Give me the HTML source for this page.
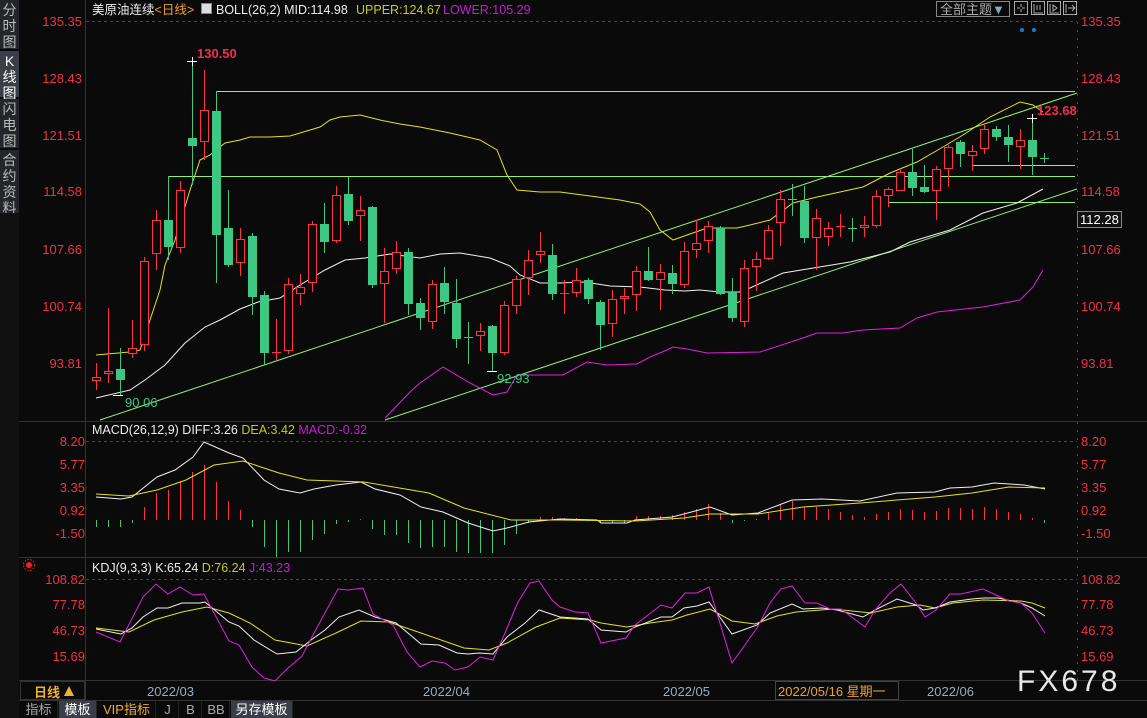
<!DOCTYPE html>
<html><head><meta charset="utf-8"><style>
*{margin:0;padding:0;box-sizing:border-box}
body{width:1147px;height:718px;background:#0a0a0a;overflow:hidden;position:relative;font-family:"Liberation Sans","Noto Sans CJK SC",sans-serif;color:#ddd}
.t{position:absolute;white-space:nowrap;font-size:13px;line-height:15px}
.tt{font-size:12.5px}
.r{color:#f0304a}
.side{position:absolute;left:0;width:19px;background:#24262b;color:#bbb;font-size:14px;line-height:16px;text-align:center;padding-top:2px}
.tab{position:absolute;top:701px;height:17px;font-size:13px;line-height:17px;text-align:center;color:#aaa;border-right:1px solid #222}
</style></head><body>
<div class="side" style="top:0;height:49px">分<br>时<br>图</div>
<div class="side" style="top:51px;height:46px;background:#3b3e46;color:#fff">K<br>线<br>图</div>
<div class="side" style="top:99px;height:49px">闪<br>电<br>图</div>
<div class="side" style="top:150px;height:63px">合<br>约<br>资<br>料</div>
<div style="position:absolute;left:0;top:213px;width:19px;height:505px;background:#111"></div>

<svg width="1147" height="718" style="position:absolute;left:0;top:0" id="sv">
<g stroke="#333" stroke-width="1">
<line x1="85.5" y1="0" x2="85.5" y2="700"/>
<line x1="19" y1="421.5" x2="1147" y2="421.5"/>
<line x1="19" y1="557.5" x2="1147" y2="557.5"/>
<line x1="19" y1="680.5" x2="1147" y2="680.5"/>
<line x1="19" y1="700.5" x2="1147" y2="700.5"/>
</g>
<rect x="20.5" y="681.5" width="64" height="18" fill="none" stroke="#333"/>
<g stroke="#444" stroke-dasharray="3,3">
<line x1="86" y1="21.5" x2="1077" y2="21.5"/>
<line x1="86" y1="441.5" x2="1077" y2="441.5"/>
<line x1="86" y1="579.5" x2="1077" y2="579.5"/>
<line x1="1077.5" y1="22" x2="1077.5" y2="680" stroke-dasharray="2,6"/>
</g>
<g stroke="#90f070" stroke-width="1" fill="none">
<polyline points="216.5,112 216.5,91.5 1075,91.5"/>
<polyline points="168.5,220 168.5,176.5 1075,176.5"/>
<line x1="972" y1="165.5" x2="1075" y2="165.5"/>
<line x1="888" y1="202.5" x2="1075" y2="202.5"/>
<line x1="100" y1="420" x2="1077" y2="93"/>
<line x1="385" y1="420" x2="1077" y2="189"/>
</g>
<polyline fill="none" stroke="#f0f0f0" stroke-width="1" points="96,398 130,390 145,380 165,365 185,343 205,327 220,320 240,309 258,302 280,298 300,285 325,270 345,260 365,258 390,254 420,258 440,254 460,253 490,258 510,266 520,275 540,283 560,283 585,282 610,286 640,287 665,290 685,291 700,290 720,292 740,292 750,288 783,273 850,262 890,252 910,242 950,230 983,213 1017,203 1043,189"/>
<polyline fill="none" stroke="#e8e020" stroke-width="1" points="96,355 130,352 140,350 150,320 160,290 165,265 175,240 190,190 200,160 210,155 225,143 240,140 250,137 270,137 290,136 300,133 320,127 330,120 340,117 360,115 380,120 400,124 420,127 450,133 480,140 497,150 507,175 517,190 540,192 560,192 590,196 620,200 640,204 650,212 660,230 673,240 687,235 707,228 737,228 750,225 770,220 793,203 817,197 863,187 890,173 917,162 943,147 963,135 990,117 1020,102 1033,105 1043,112"/>
<polyline fill="none" stroke="#e020e0" stroke-width="1" points="385,418 410,392 420,383 443,367 470,383 493,395 507,392 517,375 563,375 587,362 607,365 637,364 650,357 667,350 673,347 687,349 707,353 760,352 800,339 817,333 843,333 863,330 900,328 917,318 937,312 983,307 1020,300 1033,287 1043,270"/>
<g id="cd"></g>
<g id="hist"></g>
<polyline fill="none" stroke="#f0f0f0" points="96,497 121,499 132,497 157,477 175,470 193,457 204,442 229,453 243,458 264,480 279,489 300,493 314,489 336,485 361,482 375,489 400,495 421,507 443,512 468,523 493,531 507,528 529,522 560,519 597,520 601,523 627,523 635,520 672,517 684,514 710,507 732,515 758,513 792,500 822,499 860,501 897,493 935,492 950,488 972,487 994,483 1024,485 1045,489"/>
<polyline fill="none" stroke="#e8e020" points="96,494 129,496 157,490 186,480 214,465 243,461 279,473 307,480 364,482 429,493 464,508 511,520 560,520 635,521 684,518 710,514 758,514 803,507 860,503 935,497 972,493 1009,487 1045,488"/>
<polyline fill="none" stroke="#e8e020" points="96,628 129,632 154,620 182,612 207,607 229,613 250,623 275,640 307,646 336,633 361,621 389,622 421,633 464,648 489,650 507,643 536,627 560,618 590,620 601,623 627,627 650,623 672,620 687,615 710,609 732,621 755,624 777,616 796,612 833,609 871,613 897,607 920,605 935,608 953,603 983,600 1021,601 1032,603 1045,608"/>
<polyline fill="none" stroke="#f0f0f0" points="96,629 121,634 132,628 143,617 157,608 168,608 182,603 200,603 205,602 229,622 239,626 254,640 277,654 296,652 311,640 325,630 339,617 359,610 375,617 396,623 421,644 439,645 457,653 468,654 479,653 493,654 507,637 525,623 539,610 560,617 588,619 601,630 626,632 635,627 661,617 672,617 684,608 697,606 709,602 732,634 757,625 770,613 792,604 803,609 822,608 837,610 863,617 875,610 897,599 916,605 923,610 935,608 950,602 972,599 983,598 998,598 1021,603 1032,608 1045,616"/>
<polyline fill="none" stroke="#e020e0" points="96,632 120,642 143,597 156,584 168,594 180,587 193,595 204,594 214,613 229,641 239,645 252,667 264,678 275,681 288,668 302,656 314,633 338,589 348,590 363,588 373,614 393,625 407,652 420,667 432,661 445,663 455,670 468,667 480,657 493,660 505,633 518,602 530,583 539,581 552,600 560,607 575,612 588,613 601,643 626,638 635,625 661,605 672,608 685,593 697,593 709,587 732,663 757,628 770,603 781,589 792,586 805,603 817,603 830,609 841,609 865,627 875,610 890,593 901,584 916,603 925,617 936,610 950,594 961,594 983,589 996,595 1009,601 1021,603 1032,613 1045,633"/>
<g stroke="#fff"><line x1="187" y1="61.5" x2="197" y2="61.5"/><line x1="192.5" y1="57" x2="192.5" y2="66"/>
<line x1="113" y1="395.5" x2="123" y2="395.5"/><line x1="487" y1="371.5" x2="497" y2="371.5"/>
<line x1="1027" y1="118.5" x2="1037" y2="118.5"/><line x1="1032.5" y1="114" x2="1032.5" y2="123"/></g>
<circle cx="1022" cy="30" r="2" fill="#1a7fd0"/><circle cx="1034" cy="30" r="2" fill="#1a7fd0"/>
<circle cx="29" cy="565" r="3" fill="#f02020"/><circle cx="29" cy="565" r="5.5" fill="none" stroke="#f02020" stroke-dasharray="1.5,1.5"/>
<rect x="936.5" y="1.5" width="73" height="15" fill="none" stroke="#888"/>
<g fill="none" stroke="#aaa"><rect x="1014.5" y="1.5" width="13" height="13"/><rect x="1031.5" y="1.5" width="13" height="13"/><rect x="1047.5" y="1.5" width="13" height="13"/><rect x="1063.5" y="1.5" width="13" height="13"/>
<path d="M1021 4v3M1021 9v3M1017 8h3M1022 8h3M1034 4v9h9M1037 5v5M1040 5v5M1050 4v9h9M1053 5l4 3-4 3zM1066 4v9M1068 8h7M1072 5l3 3-3 3"/></g>
<rect x="775.5" y="681.5" width="123" height="18" fill="#0a0a0a" stroke="#444"/>
<polygon points="64,696 69,686 74,696" fill="#f0b030"/>
<rect x="1077.5" y="211.5" width="44" height="16" fill="#111" stroke="#888"/>
</svg>

<div class="t tt" style="left:92px;top:3px;color:#eee">美原油连续<span style="color:#f0a030">&lt;日线&gt;</span></div>
<div class="t" style="left:201px;top:3px;width:11px;height:11px;background:#ddd;border:1px solid #888"></div>
<div class="t tt" style="left:216px;top:3px;color:#eee">BOLL(26,2) MID:114.98</div>
<div class="t tt" style="left:356px;top:3px;color:#c8c820">UPPER:124.67</div>
<div class="t tt" style="left:443px;top:3px;color:#c020d0">LOWER:105.29</div>
<div class="t" style="left:940px;top:2px;color:#aaa">全部主题<span style="color:#8ab">▼</span></div>

<div class="t r" style="left:30px;top:14px;width:52px;text-align:right">135.35</div>
<div class="t r" style="left:30px;top:71px;width:52px;text-align:right">128.43</div>
<div class="t r" style="left:30px;top:128px;width:52px;text-align:right">121.51</div>
<div class="t r" style="left:30px;top:184px;width:52px;text-align:right">114.58</div>
<div class="t r" style="left:30px;top:242px;width:52px;text-align:right">107.66</div>
<div class="t r" style="left:30px;top:299px;width:52px;text-align:right">100.74</div>
<div class="t r" style="left:30px;top:356px;width:52px;text-align:right">93.81</div>
<div class="t r" style="left:1081px;top:14px">135.35</div>
<div class="t r" style="left:1081px;top:71px">128.43</div>
<div class="t r" style="left:1081px;top:128px">121.51</div>
<div class="t r" style="left:1081px;top:184px">114.58</div>
<div class="t r" style="left:1081px;top:242px">107.66</div>
<div class="t r" style="left:1081px;top:299px">100.74</div>
<div class="t r" style="left:1081px;top:356px">93.81</div>
<div class="t" style="left:1080px;top:212px;color:#fff">112.28</div>
<div class="t r" style="left:197px;top:46px;font-weight:bold">130.50</div>
<div class="t r" style="left:1037px;top:103px;font-weight:bold">123.68</div>
<div class="t" style="left:125px;top:395px;color:#3cc882">90.06</div>
<div class="t" style="left:497px;top:371px;color:#3cc882">92.93</div>

<div class="t tt" style="left:92px;top:423px;color:#eee">MACD(26,12,9) DIFF:3.26 <span style="color:#c8c820">DEA:3.42</span> <span style="color:#c020d0">MACD:-0.32</span></div>
<div class="t r" style="left:30px;top:434px;width:55px;text-align:right">8.20</div>
<div class="t r" style="left:30px;top:457px;width:55px;text-align:right">5.77</div>
<div class="t r" style="left:30px;top:480px;width:55px;text-align:right">3.35</div>
<div class="t r" style="left:30px;top:503px;width:55px;text-align:right">0.92</div>
<div class="t r" style="left:30px;top:526px;width:55px;text-align:right">-1.50</div>
<div class="t r" style="left:1081px;top:434px">8.20</div>
<div class="t r" style="left:1081px;top:457px">5.77</div>
<div class="t r" style="left:1081px;top:480px">3.35</div>
<div class="t r" style="left:1081px;top:503px">0.92</div>
<div class="t r" style="left:1081px;top:526px">-1.50</div>

<div class="t tt" style="left:92px;top:561px;color:#eee">KDJ(9,3,3) K:65.24 <span style="color:#c8c820">D:76.24</span> <span style="color:#c020d0">J:43.23</span></div>
<div class="t r" style="left:30px;top:572px;width:55px;text-align:right">108.82</div>
<div class="t r" style="left:30px;top:597px;width:55px;text-align:right">77.78</div>
<div class="t r" style="left:30px;top:623px;width:55px;text-align:right">46.73</div>
<div class="t r" style="left:30px;top:649px;width:55px;text-align:right">15.69</div>
<div class="t r" style="left:1081px;top:572px">108.82</div>
<div class="t r" style="left:1081px;top:597px">77.78</div>
<div class="t r" style="left:1081px;top:623px">46.73</div>
<div class="t r" style="left:1081px;top:649px">15.69</div>

<div class="t" style="left:34px;top:685px;color:#f0b030;font-weight:bold">日线</div>
<div class="t" style="left:147px;top:684px;color:#9ab">2022/03</div>
<div class="t" style="left:423px;top:684px;color:#9ab">2022/04</div>
<div class="t" style="left:663px;top:684px;color:#9ab">2022/05</div>
<div class="t" style="left:778px;top:684px;color:#f0a030">2022/05/16 星期一</div>
<div class="t" style="left:927px;top:684px;color:#9ab">2022/06</div>
<div class="t" style="left:1017px;top:666px;font-size:30px;line-height:32px;color:#e8e8e8;letter-spacing:3px">FX678</div>

<div class="tab" style="left:20px;width:38px">指标</div>
<div class="tab" style="left:59px;width:38px;background:#3b3e48;color:#fff">模板</div>
<div class="tab" style="left:98px;width:58px;color:#f0b030">VIP指标</div>
<div class="tab" style="left:157px;width:22px">J</div>
<div class="tab" style="left:180px;width:22px">B</div>
<div class="tab" style="left:203px;width:27px">BB</div>
<div class="tab" style="left:231px;width:62px;background:#3b3e48;color:#fff">另存模板</div>

<script>
var C=[["r",377,381,363,390],["r",371,374,308,383],["g",369,380,348,395],["r",348,354,320,358],["r",261,345,257,351],["r",220,254,210,270],["g",220,247,176,260],["r",190,248,181,253],["g",138,146,61,185],["r",110,142,70,160],["g",111,235,91,283],["g",228,265,190,267],["r",239,263,228,276],["g",236,297,233,315],["g",295,353,291,365],["r",352,352,319,360],["r",284,351,278,354],["r",287,294,274,305],["r",224,283,221,292],["g",224,242,203,253],["r",195,241,186,243],["g",194,221,177,225],["r",210,216,196,241],["g",207,285,206,288],["r",271,284,248,323],["r",252,269,241,274],["g",252,304,248,315],["g",303,318,298,330],["r",284,322,280,329],["g",283,302,267,314],["g",303,339,279,348],["g",337,337,322,364],["r",331,336,323,351],["g",326,353,325,371],["r",305,353,301,355],["r",279,306,276,314],["r",260,278,250,295],["r",251,255,232,263],["g",255,294,244,300],["r",293,293,280,314],["r",280,293,268,297],["g",280,299,278,304],["g",302,325,300,350],["r",299,324,290,337],["r",296,299,288,314],["r",271,295,266,311],["g",271,280,247,281],["r",272,280,264,310],["g",273,284,265,294],["r",251,285,242,288],["r",243,250,220,258],["r",226,241,221,253],["g",228,294,226,295],["g",292,318,278,322],["r",268,322,260,327],["r",259,267,252,291],["r",230,259,225,260],["r",199,223,190,246],["g",199,200,184,216],["g",201,238,186,243],["r",218,238,209,270],["r",228,237,222,246],["r",226,226,214,237],["g",228,228,218,242],["r",225,228,216,237],["r",196,226,190,228],["r",189,196,187,207],["r",172,191,170,191],["g",172,188,149,196],["g",187,192,165,193],["r",169,191,166,220],["r",147,169,145,187],["g",142,154,140,167],["r",151,156,145,171],["r",129,149,123,154],["g",129,137,126,141],["g",137,145,125,162],["r",140,147,129,169],["g",140,157,118,175],["g",158,158,153,163]];
var H=[527,527,527,523,507,493,490,481,472,465,482,501,510,527,547,557,552,552,540,534,524,522,519,529,535,535,543,548,547,547,552,553,553,553,545,534,523,517,517,518,518,521,523,523,523,516,516,516,515,512,509,504,513,523,521,519,513,504,501,507,507,509,512,515,517,514,512,509,510,512,511,508,508,509,507,509,512,514,518,523];
var s='',h='',R='#ff3348',G='#3cc882';
C.forEach(function(c,i){var x=96.5+12*i,col=c[0]=='r'?R:G;
s+='<line x1="'+x+'" x2="'+x+'" y1="'+c[3]+'" y2="'+c[1]+'" stroke="'+col+'"/><line x1="'+x+'" x2="'+x+'" y1="'+c[2]+'" y2="'+c[4]+'" stroke="'+col+'"/>';
var hh=Math.max(c[2]-c[1],1);
if(c[0]=='r')s+='<rect x="'+(x-4)+'" y="'+(c[1]+.5)+'" width="8" height="'+(hh-1<1?0.01:hh-1)+'" fill="#0a0a0a" stroke="'+R+'"/>';
else s+='<rect x="'+(x-4.5)+'" y="'+c[1]+'" width="9" height="'+hh+'" fill="'+G+'"/>';
var v=H[i];h+='<line x1="'+x+'" x2="'+x+'" y1="520" y2="'+v+'" stroke="'+(v<520?R:G)+'"/>';});
document.getElementById('cd').innerHTML=s;document.getElementById('hist').innerHTML=h;
</script>
</body></html>
